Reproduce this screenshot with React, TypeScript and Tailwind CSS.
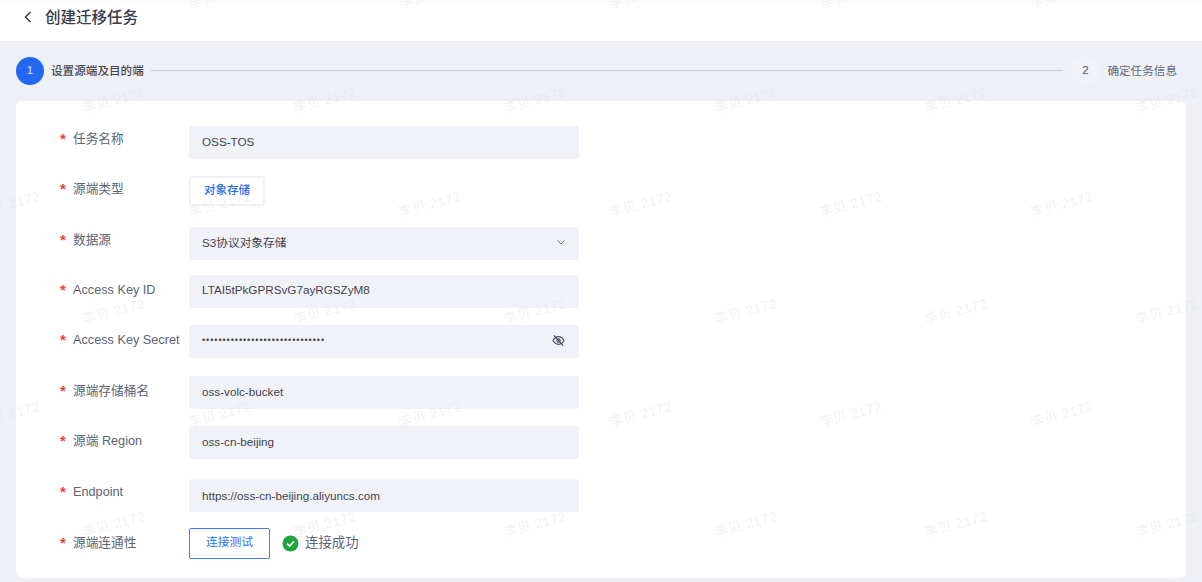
import React from "react";

const FONT = "font-['Liberation_Sans','Noto_Sans_CJK_SC',sans-serif]";

const wmRows: [number, number][] = [
  [-4, 220], [101, 114], [205, 9], [312, 114], [415, 9], [525, 114],
];

function Watermarks() {
  const items: { x: number; y: number }[] = [];
  wmRows.forEach(([y, start]) => {
    for (let i = 0; i < 6; i++) {
      const x = start + i * 210.5;
      if (x < 1240) items.push({ x, y });
    }
  });
  return (
    <div className="pointer-events-none absolute inset-0 overflow-hidden">
      {items.map((p, i) => (
        <span
          key={i}
          className="absolute whitespace-nowrap text-[13.5px] tracking-[0.5px] text-[#dfe2e8]/45 -rotate-[15deg] -translate-x-1/2 -translate-y-1/2"
          style={{ left: p.x, top: p.y }}
        >
          李贝 2172
        </span>
      ))}
    </div>
  );
}

function Field({ children, textClass = "" }: { children: React.ReactNode; textClass?: string }) {
  return (
    <div className="flex h-[33px] w-[390px] items-center justify-between rounded-[3px] bg-[#f1f2f7] pl-[13px] pr-[14px] text-[11.7px] text-[#3f4450]">
      <span className={`flex w-full items-center justify-between ${textClass}`}>{children}</span>
    </div>
  );
}

function Row({
  label,
  className,
  labelClass,
  children,
}: {
  label: string;
  className: string;
  labelClass: string;
  children: React.ReactNode;
}) {
  return (
    <div className={`flex items-center ${className}`}>
      <div className={`flex w-[173px] shrink-0 items-center pl-[44px] ${labelClass}`}>
        <span className="h-[11px] w-[13px] shrink-0 -translate-y-[2px] text-[15px] font-bold leading-[14px] text-[#ee3f3f]">*</span>
        <span className="whitespace-nowrap text-[12.7px] text-[#5c6473]">{label}</span>
      </div>
      {children}
    </div>
  );
}

export default function App() {
  return (
    <div className={`relative h-[582px] w-[1202px] overflow-hidden bg-[#eef0f5] ${FONT}`}>
      <header className="flex h-[41px] items-center bg-gradient-to-b from-[#fafafa] to-white to-[12%] pl-[23px]">
        <svg width="10" height="14" viewBox="0 0 10 14" fill="none" className="-translate-y-[4px]">
          <path d="M7.5 2 L2.5 7 L7.5 12" stroke="#3a3f4a" strokeWidth="1.5" />
        </svg>
        <h1 className="ml-[12px] -translate-y-[3px] text-[15.5px] font-medium text-[#363b46]">创建迁移任务</h1>
      </header>

      <div className="flex h-[60px] items-center pl-[16px] pr-[25px]">
        <div className="flex h-[28px] w-[28px] items-center justify-center rounded-full bg-[#2468f2] text-[11.5px] text-[#d8e4ff]">1</div>
        <span className="ml-[7px] text-[11.6px] font-medium text-[#434854]">设置源端及目的端</span>
        <div className="ml-[7px] h-[1px] -translate-y-[1px] flex-1 bg-[#c9ccd4]" />
        <div className="ml-[8px] flex h-[28px] w-[28px] items-center justify-center rounded-full bg-[#f1f2f7] text-[11.5px] text-[#4e5462]">2</div>
        <span className="ml-[8px] text-[11.6px] text-[#62687a]">确定任务信息</span>
      </div>

      <main className="ml-[16px] h-[477px] w-[1170px] rounded-[6px] bg-white pt-[25px]">
        <Row label="任务名称" className="" labelClass="-translate-y-[3px]">
          <Field textClass="-translate-y-[1px]">OSS-TOS</Field>
        </Row>
        <Row label="源端类型" className="mt-[17px]" labelClass="-translate-y-[1px]">
          <div className="flex h-[30px] w-[76px] items-center justify-center rounded-[2px] border-[2px] border-[#eff1f6] bg-white text-[11.5px] font-medium text-[#2468f2]">
            对象存储
          </div>
        </Row>
        <Row label="数据源" className="mt-[21px]" labelClass="-translate-y-[3px]">
          <Field textClass="-translate-y-[1px]">
            <span>S3协议对象存储</span>
            <svg width="10" height="10" viewBox="0 0 10 10" fill="none" className="-mr-[1px]">
              <path d="M1.5 3.5 L5 7 L8.5 3.5" stroke="#6f7583" strokeWidth="1" />
            </svg>
          </Field>
        </Row>
        <Row label="Access Key ID" className="mt-[15px]" labelClass="-translate-y-[1px]">
          <Field textClass="-translate-y-[2px]">LTAI5tPkGPRSvG7ayRGSZyM8</Field>
        </Row>
        <Row label="Access Key Secret" className="mt-[17px]" labelClass="-translate-y-[1px]">
          <Field textClass="-translate-y-[1px]">
            <span className="text-[9px] tracking-[0.95px]">••••••••••••••••••••••••••••••</span>
            <svg width="13" height="13" viewBox="0 0 24 24" fill="none" stroke="#4a4f5b" strokeWidth="2.2" strokeLinecap="round" strokeLinejoin="round">
              <path d="M2 12s3.6-7 10-7 10 7 10 7-3.6 7-10 7-10-7-10-7Z" />
              <circle cx="12" cy="12" r="3" />
              <path d="M4 3l16 18" />
            </svg>
          </Field>
        </Row>
        <Row label="源端存储桶名" className="mt-[18px]" labelClass="-translate-y-[1px]">
          <Field textClass="-translate-y-[1px]">oss-volc-bucket</Field>
        </Row>
        <Row label="源端 Region" className="mt-[17px]" labelClass="-translate-y-[1px]">
          <Field textClass="-translate-y-[1px]">oss-cn-beijing</Field>
        </Row>
        <Row label="Endpoint" className="mt-[20px]" labelClass="-translate-y-[3px]">
          <Field>https://oss-cn-beijing.aliyuncs.com</Field>
        </Row>
        <Row label="源端连通性" className="mt-[16px]" labelClass="">
          <div className="flex h-[31px] w-[81px] items-center justify-center rounded-[2px] border border-[#3f7df3] bg-white text-[11.8px] text-[#2f72f2]">
            <span className="-translate-y-[1px]">连接测试</span>
          </div>
          <svg width="17" height="17" viewBox="0 0 17 17" className="ml-[12px]">
            <circle cx="8.5" cy="8.5" r="8" fill="#1fa53d" />
            <path d="M5 8.7 L7.6 11.1 L12 6.4" fill="none" stroke="#fff" strokeWidth="1.7" />
          </svg>
          <span className="ml-[6px] text-[13.4px] text-[#5c6473]">连接成功</span>
        </Row>
      </main>
      <Watermarks />
    </div>
  );
}
